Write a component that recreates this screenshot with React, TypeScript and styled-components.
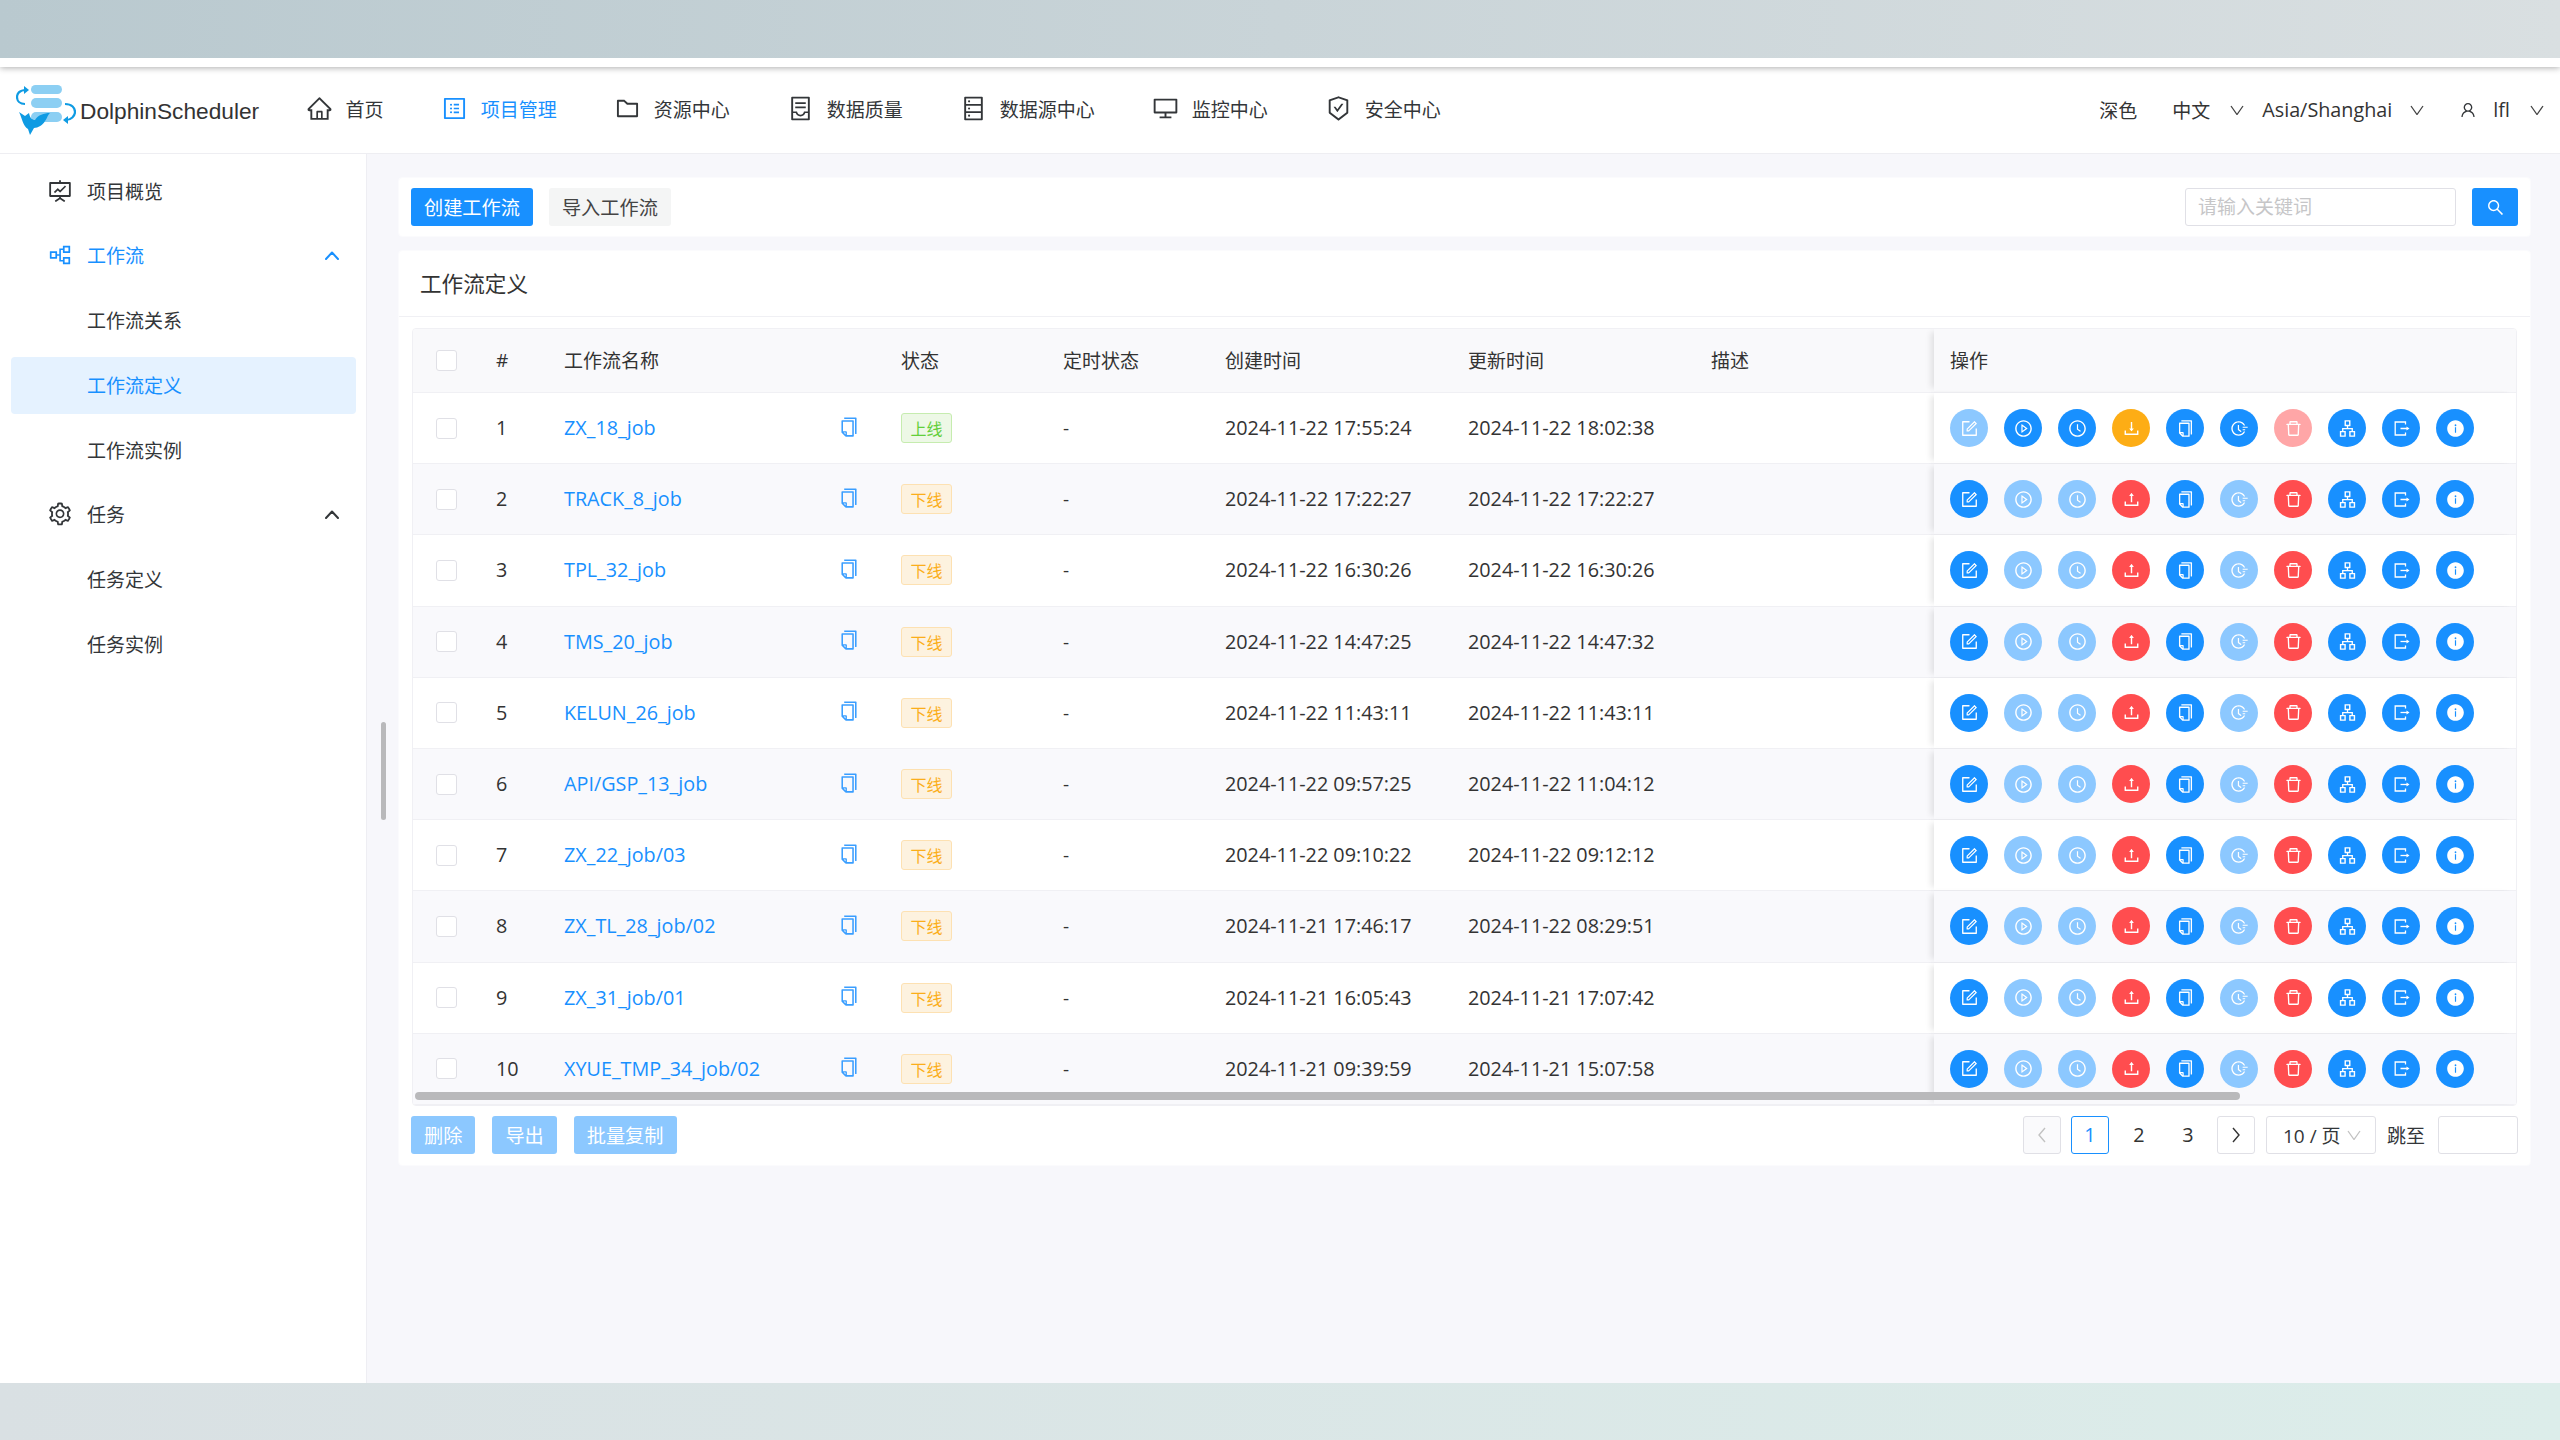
import React from 'react'
import styled, { createGlobalStyle } from 'styled-components'
import {
  AiOutlineHome,
  AiOutlineProfile,
  AiOutlineFolder,
  AiOutlineContainer,
  AiOutlineDatabase,
  AiOutlineDesktop,
  AiOutlineSafetyCertificate,
  AiOutlineFundProjectionScreen,
  AiOutlinePartition,
  AiOutlineSetting,
  AiOutlineUser,
  AiOutlineSearch,
  AiOutlineCopy,
  AiOutlineForm,
  AiOutlinePlayCircle,
  AiOutlineClockCircle,
  AiOutlineDownload,
  AiOutlineUpload,
  AiOutlineFieldTime,
  AiOutlineDelete,
  AiOutlineApartment,
  AiFillInfoCircle,
} from 'react-icons/ai'

const PRIMARY = '#1890ff'
const TEXT = '#333639'
const LATIN_SIZE = '19.8px'
const COLUMNS = '67px 68px 337px 162px 162px 243px 243px 239px 1fr'

const GlobalStyle = createGlobalStyle`
  html, body { margin: 0; padding: 0; }
  body {
    font-family: "Open Sans", "Noto Sans CJK SC", sans-serif;
    font-size: 19px;
    color: ${TEXT};
  }
  * { box-sizing: border-box; }
`

const Page = styled.div`
  width: 2560px;
  height: 1440px;
  display: flex;
  flex-direction: column;
  overflow: hidden;
`

const TopBand = styled.div`
  height: 58px;
  flex: none;
  background: linear-gradient(90deg, #b9c9cf, #d9dfe1);
`

const BottomBand = styled.div`
  height: 57px;
  flex: none;
  background: linear-gradient(90deg, #d9e0e3, #dcedea);
`

const TitleStrip = styled.div`
  height: 9px;
  flex: none;
  background: #fff;
  position: relative;
  box-shadow: 0 1px 6px rgba(0, 0, 0, 0.32);
  clip-path: inset(0 0 -12px 0);
`

const Header = styled.header`
  height: 87px;
  flex: none;
  display: flex;
  align-items: center;
  padding: 0 16px;
  background: #fff;
  border-bottom: 1px solid #eeeef2;
`

const Logo = styled.div`
  display: flex;
  align-items: center;
  gap: 4px;
`

const LogoText = styled.span`
  font-family: "Liberation Sans", Arial, sans-serif;
  font-size: 22.7px;
  color: #333;
  margin-top: 3px;
`

const Nav = styled.nav`
  display: flex;
  align-items: center;
  gap: 57.5px;
  margin-left: 47px;
  margin-bottom: 3px;
`

const NavItem = styled.div<{ $active?: boolean }>`
  display: flex;
  align-items: center;
  gap: 12.5px;
  color: ${p => (p.$active ? PRIMARY : TEXT)};
  svg { display: block; }
`

const HeaderRight = styled.div`
  margin-left: auto;
  display: flex;
  align-items: center;
  margin-bottom: 1px;
`

const RightText = styled.span<{ $after: number; $latin?: boolean }>`
  margin-right: ${p => p.$after}px;
  font-size: ${p => (p.$latin ? LATIN_SIZE : 'inherit')};
  color: #333;
`

const UserGlyph = styled.span`
  display: flex;
  margin-right: 16.5px;
`

const DownChevron = styled.svg<{ $after?: number }>`
  width: 14px;
  height: 10px;
  display: block;
  fill: none;
  stroke: #444;
  stroke-width: 1.3;
  margin-right: ${p => p.$after ?? 0}px;
`

const Body = styled.div`
  flex: 1;
  display: flex;
  min-height: 0;
`

const Sidebar = styled.aside`
  width: 367px;
  flex: none;
  display: flex;
  flex-direction: column;
  gap: 7.75px;
  padding: 8.5px 10px 0 11px;
  background: #fff;
  border-right: 1px solid #eeeef3;
`

const MenuRow = styled.div<{ $active?: boolean; $selected?: boolean }>`
  height: 57px;
  flex: none;
  display: flex;
  align-items: center;
  gap: 14px;
  padding: 0 17px 1px 36px;
  border-radius: 4px;
  color: ${p => (p.$active || p.$selected ? PRIMARY : TEXT)};
  background: ${p => (p.$selected ? '#e5f2ff' : 'transparent')};
  svg { display: block; flex: none; }
`

const SubRow = styled(MenuRow)`
  padding-left: 76px;
`

const UpChevron = styled.svg`
  width: 14px;
  height: 9px;
  margin-left: auto;
  fill: none;
  stroke: currentColor;
  stroke-width: 2;
  stroke-linecap: round;
  stroke-linejoin: round;
`

const Main = styled.main`
  flex: 1;
  position: relative;
  display: flex;
  flex-direction: column;
  gap: 13px;
  padding: 23px 29px 0 31px;
  background: #f7f7fb;
`

const SideThumb = styled.div`
  position: absolute;
  left: 14px;
  top: 568px;
  width: 5px;
  height: 98px;
  border-radius: 3px;
  background: #b9b9bb;
`

const Card = styled.section`
  background: #fff;
  border: 1px solid #fbfbfd;
  border-radius: 4px;
`

const Toolbar = styled(Card)`
  height: 60px;
  display: flex;
  align-items: center;
  padding: 0 12px;
`

const Button = styled.button<{ $kind?: 'primary' | 'default' | 'disabled' }>`
  height: 38px;
  padding: 0 13px;
  border: 0;
  border-radius: 3px;
  font: inherit;
  font-size: 19.2px;
  white-space: nowrap;
  color: ${p => (p.$kind === 'default' ? '#444' : '#fff')};
  background: ${p =>
    p.$kind === 'default' ? '#f4f5f5' : p.$kind === 'disabled' ? '#8cc8ff' : PRIMARY};
`

const ButtonGroup = styled.div`
  display: flex;
  gap: 16px;
`

const SearchInput = styled.input`
  width: 271px;
  height: 38px;
  margin-left: auto;
  padding: 0 12px;
  border: 1px solid #e0e0e6;
  border-radius: 3px;
  font: inherit;
  outline: none;
  &::placeholder { color: #c6c6c8; opacity: 1; }
`

const SearchButton = styled.button`
  width: 46px;
  height: 38px;
  margin-left: 16px;
  display: flex;
  align-items: center;
  justify-content: center;
  border: 0;
  border-radius: 3px;
  color: #fff;
  background: ${PRIMARY};
`

const ListCard = styled(Card)`
  padding-bottom: 11px;
`

const CardTitle = styled.div`
  height: 66px;
  display: flex;
  align-items: center;
  padding: 0 0 2px 21px;
  font-size: 21.6px;
  color: #333;
  border-bottom: 1px solid #f0f0f4;
`

const CardBody = styled.div`
  padding: 11px 12px 0;
`

const TableWrap = styled.div`
  position: relative;
  margin: 0 1px;
  border: 1px solid #f0f0f4;
  border-radius: 4px;
  overflow: hidden;
`

const HeadRow = styled.div`
  height: 64px;
  display: grid;
  grid-template-columns: ${COLUMNS};
  padding-bottom: 1px;
  background: #f9f9fb;
  border-bottom: 1px solid #f0f0f4;
`

const TableRow = styled.div<{ $striped: boolean }>`
  height: 71.2px;
  display: grid;
  grid-template-columns: ${COLUMNS};
  background: ${p => (p.$striped ? '#f9f9fc' : '#fff')};
  border-bottom: 1px solid #f0f0f4;
  &:last-child { border-bottom: 0; }
`

const Cell = styled.div`
  display: flex;
  align-items: center;
  padding: 0 16px;
  white-space: nowrap;
  color: #333;
`

const DataCell = styled(Cell)`
  padding-bottom: 1px;
  font-size: ${LATIN_SIZE};
`

const CheckCell = styled(Cell)`
  padding-left: 23px;
`

const NameCell = styled(Cell)`
  justify-content: space-between;
  padding-right: 25px;
`

const ActionCell = styled(Cell)`
  gap: 16px;
  background: inherit;
  box-shadow: -6px 0 6px -3px rgba(0, 0, 0, 0.1);
`

const Checkbox = styled.span`
  width: 21px;
  height: 21px;
  display: block;
  background: #fff;
  border: 1px solid #e0e0e6;
  border-radius: 3px;
`

const JobLink = styled.a`
  margin-bottom: 1px;
  font-size: ${LATIN_SIZE};
  color: ${PRIMARY};
`

const CopyMark = styled.span`
  display: flex;
  margin-top: -3px;
  color: #3a9eff;
`

const Tag = styled.span<{ $online: boolean }>`
  width: 51px;
  height: 30px;
  display: flex;
  align-items: center;
  justify-content: center;
  font-size: 16px;
  border-radius: 3px;
  border: 1px solid ${p => (p.$online ? '#c6ecaf' : '#fde1b2')};
  color: ${p => (p.$online ? '#63cf3a' : '#fbae1a')};
  background: ${p => (p.$online ? '#edf8e6' : '#fdf2df')};
`

const TONES = {
  blue: PRIMARY,
  light: '#8cc8ff',
  red: '#ff4d4f',
  pink: '#ffa6a7',
  orange: '#fdad15',
}

const Round = styled.span<{ $tone: keyof typeof TONES }>`
  width: 38px;
  height: 38px;
  flex: none;
  display: flex;
  align-items: center;
  justify-content: center;
  border-radius: 50%;
  color: #fff;
  background: ${p => TONES[p.$tone]};
  svg { display: block; }
`

const ScrollThumb = styled.div`
  position: absolute;
  left: 2px;
  bottom: 5px;
  width: 1825px;
  height: 8px;
  border-radius: 4px;
  background: #b9b9bb;
`

const Footer = styled.div`
  display: flex;
  align-items: center;
  margin-top: 10px;
`

const FooterButtons = styled.div`
  display: flex;
  gap: 17px;
`

const Pager = styled.div`
  margin-left: auto;
  display: flex;
  align-items: center;
`

const PageBox = styled.div<{ $active?: boolean; $disabled?: boolean; $outlined?: boolean; $after: number }>`
  width: 38px;
  height: 38px;
  display: flex;
  align-items: center;
  justify-content: center;
  margin-right: ${p => p.$after}px;
  border-radius: 3px;
  font-size: ${LATIN_SIZE};
  border: 1px solid ${p => (p.$active ? PRIMARY : p.$outlined ? '#e0e0e6' : 'transparent')};
  color: ${p => (p.$active ? PRIMARY : p.$disabled ? '#c2c2c2' : '#333')};
  background: ${p => (p.$disabled ? '#fafafc' : 'transparent')};
`

const PageArrow = styled.svg`
  width: 10px;
  height: 16px;
  fill: none;
  stroke: currentColor;
  stroke-width: 1.4;
`

const SizeSelect = styled.div`
  width: 110px;
  height: 38px;
  display: flex;
  align-items: center;
  justify-content: space-between;
  padding: 0 14px 0 16px;
  border: 1px solid #e0e0e6;
  border-radius: 3px;
  white-space: nowrap;
  svg { stroke: #c2c2c2; }
`

const JumpLabel = styled.span`
  margin: 0 13px 0 11px;
`

const JumpInput = styled.input`
  width: 80px;
  height: 38px;
  border: 1px solid #e0e0e6;
  border-radius: 3px;
  outline: none;
`

const Down = ({ after }: { after?: number }) => (
  <DownChevron $after={after} viewBox="0 0 14 10">
    <polyline points="1,1 7,9.5 13,1" />
  </DownChevron>
)

const Up = () => (
  <UpChevron viewBox="0 0 14 9">
    <polyline points="1,8 7,1.5 13,8" />
  </UpChevron>
)

// open box with an arrow leaving on the right, the package's export icon points up-right instead
const ExportGlyph = () => (
  <svg width="19" height="19" viewBox="0 0 19 19" fill="none" stroke="currentColor" strokeWidth="1.3">
    <polyline points="13.5,5.5 13.5,3 3.2,3 3.2,16 13.5,16 13.5,13.5" />
    <line x1="8.5" y1="9.5" x2="15" y2="9.5" />
    <path d="M14.5 7.4 L17.5 9.5 L14.5 11.6 Z" fill="currentColor" stroke="none" />
  </svg>
)

const LogoMark = () => (
  <svg width="60" height="50" viewBox="0 0 60 50">
    <g fill="#8ccff3">
      <rect x="15" y="0" width="31" height="9" rx="4.5" />
      <rect x="15" y="13" width="31" height="10" rx="5" />
      <rect x="15" y="27" width="31" height="10" rx="5" />
    </g>
    <g fill="none" stroke="#0f9be3" strokeWidth="2.2">
      <path d="M10 5 C3 5 1 9 1 12 C1 16 4 19 9 19" />
      <path d="M49 19 C56 19 59 23 59 27 C59 31 55 35 50 35" />
    </g>
    <g fill="#0f9be3">
      <path d="M8 1 L13 5 L8 9 Z" />
      <path d="M52 31 L47 35 L52 39 Z" />
      <path d="M3 27 L9 31 L13 28 C14 33 16 35 19 35 C22 30 28 28 34 28 C31 31 31 34 29 36 C27 40 22 43 18 43 L14 50 L12 44 C7 41 6 33 3 27 Z" />
    </g>
  </svg>
)

const navItems = [
  { label: '首页', icon: AiOutlineHome },
  { label: '项目管理', icon: AiOutlineProfile, active: true },
  { label: '资源中心', icon: AiOutlineFolder },
  { label: '数据质量', icon: AiOutlineContainer },
  { label: '数据源中心', icon: AiOutlineDatabase },
  { label: '监控中心', icon: AiOutlineDesktop },
  { label: '安全中心', icon: AiOutlineSafetyCertificate },
]

const jobs = [
  ['ZX_18_job', '2024-11-22 17:55:24', '2024-11-22 18:02:38'],
  ['TRACK_8_job', '2024-11-22 17:22:27', '2024-11-22 17:22:27'],
  ['TPL_32_job', '2024-11-22 16:30:26', '2024-11-22 16:30:26'],
  ['TMS_20_job', '2024-11-22 14:47:25', '2024-11-22 14:47:32'],
  ['KELUN_26_job', '2024-11-22 11:43:11', '2024-11-22 11:43:11'],
  ['API/GSP_13_job', '2024-11-22 09:57:25', '2024-11-22 11:04:12'],
  ['ZX_22_job/03', '2024-11-22 09:10:22', '2024-11-22 09:12:12'],
  ['ZX_TL_28_job/02', '2024-11-21 17:46:17', '2024-11-22 08:29:51'],
  ['ZX_31_job/01', '2024-11-21 16:05:43', '2024-11-21 17:07:42'],
  ['XYUE_TMP_34_job/02', '2024-11-21 09:39:59', '2024-11-21 15:07:58'],
]

const RowActions = ({ online }: { online: boolean }) => (
  <>
    <Round $tone={online ? 'light' : 'blue'}><AiOutlineForm size={19} /></Round>
    <Round $tone={online ? 'blue' : 'light'}><AiOutlinePlayCircle size={19} /></Round>
    <Round $tone={online ? 'blue' : 'light'}><AiOutlineClockCircle size={19} /></Round>
    <Round $tone={online ? 'orange' : 'red'}>
      {online ? <AiOutlineDownload size={19} /> : <AiOutlineUpload size={19} />}
    </Round>
    <Round $tone="blue"><AiOutlineCopy size={19} /></Round>
    <Round $tone={online ? 'blue' : 'light'}><AiOutlineFieldTime size={19} /></Round>
    <Round $tone={online ? 'pink' : 'red'}><AiOutlineDelete size={19} /></Round>
    <Round $tone="blue"><AiOutlineApartment size={19} /></Round>
    <Round $tone="blue"><ExportGlyph /></Round>
    <Round $tone="blue"><AiFillInfoCircle size={19} /></Round>
  </>
)

export default function App() {
  return (
    <Page>
      <GlobalStyle />
      <TopBand />
      <TitleStrip />
      <Header>
        <Logo>
          <LogoMark />
          <LogoText>DolphinScheduler</LogoText>
        </Logo>
        <Nav>
          {navItems.map(({ label, icon: Icon, active }) => (
            <NavItem key={label} $active={active}>
              <Icon size={27} />
              {label}
            </NavItem>
          ))}
        </Nav>
        <HeaderRight>
          <RightText $after={35}>深色</RightText>
          <RightText $after={20}>中文</RightText>
          <Down after={18} />
          <RightText $after={17.5} $latin>Asia/Shanghai</RightText>
          <Down after={35} />
          <UserGlyph><AiOutlineUser size={18} /></UserGlyph>
          <RightText $after={20} $latin>lfl</RightText>
          <Down />
        </HeaderRight>
      </Header>
      <Body>
        <Sidebar>
          <MenuRow><AiOutlineFundProjectionScreen size={26} />项目概览</MenuRow>
          <MenuRow $active><AiOutlinePartition size={26} />工作流<Up /></MenuRow>
          <SubRow>工作流关系</SubRow>
          <SubRow $selected>工作流定义</SubRow>
          <SubRow>工作流实例</SubRow>
          <MenuRow><AiOutlineSetting size={26} />任务<Up /></MenuRow>
          <SubRow>任务定义</SubRow>
          <SubRow>任务实例</SubRow>
        </Sidebar>
        <Main>
          <SideThumb />
          <Toolbar>
            <ButtonGroup>
              <Button $kind="primary">创建工作流</Button>
              <Button $kind="default">导入工作流</Button>
            </ButtonGroup>
            <SearchInput placeholder="请输入关键词" />
            <SearchButton><AiOutlineSearch size={19} /></SearchButton>
          </Toolbar>
          <ListCard>
            <CardTitle>工作流定义</CardTitle>
            <CardBody>
              <TableWrap>
                <HeadRow>
                  <CheckCell><Checkbox /></CheckCell>
                  <Cell>#</Cell>
                  <Cell>工作流名称</Cell>
                  <Cell>状态</Cell>
                  <Cell>定时状态</Cell>
                  <Cell>创建时间</Cell>
                  <Cell>更新时间</Cell>
                  <Cell>描述</Cell>
                  <ActionCell>操作</ActionCell>
                </HeadRow>
                {jobs.map(([name, created, updated], i) => (
                  <TableRow key={name} $striped={i % 2 === 1}>
                    <CheckCell><Checkbox /></CheckCell>
                    <DataCell>{i + 1}</DataCell>
                    <NameCell>
                      <JobLink>{name}</JobLink>
                      <CopyMark><AiOutlineCopy size={22} /></CopyMark>
                    </NameCell>
                    <Cell><Tag $online={i === 0}>{i === 0 ? '上线' : '下线'}</Tag></Cell>
                    <Cell>-</Cell>
                    <DataCell>{created}</DataCell>
                    <DataCell>{updated}</DataCell>
                    <Cell />
                    <ActionCell><RowActions online={i === 0} /></ActionCell>
                  </TableRow>
                ))}
                <ScrollThumb />
              </TableWrap>
              <Footer>
                <FooterButtons>
                  <Button $kind="disabled">删除</Button>
                  <Button $kind="disabled">导出</Button>
                  <Button $kind="disabled">批量复制</Button>
                </FooterButtons>
                <Pager>
                  <PageBox $outlined $disabled $after={10}>
                    <PageArrow viewBox="0 0 10 16"><polyline points="8,1 2,8 8,15" /></PageArrow>
                  </PageBox>
                  <PageBox $active $after={11}>1</PageBox>
                  <PageBox $after={11}>2</PageBox>
                  <PageBox $after={10}>3</PageBox>
                  <PageBox $outlined $after={11}>
                    <PageArrow viewBox="0 0 10 16"><polyline points="2,1 8,8 2,15" /></PageArrow>
                  </PageBox>
                  <SizeSelect>10 / 页<Down /></SizeSelect>
                  <JumpLabel>跳至</JumpLabel>
                  <JumpInput />
                </Pager>
              </Footer>
            </CardBody>
          </ListCard>
        </Main>
      </Body>
      <BottomBand />
    </Page>
  )
}
